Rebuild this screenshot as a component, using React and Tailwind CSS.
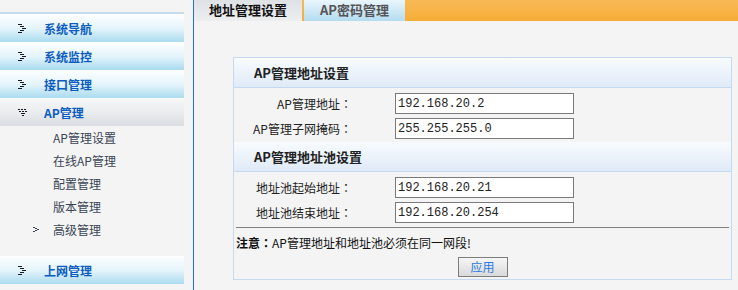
import React from 'react'

const font = { fontFamily: '"Noto Sans CJK SC", "Liberation Sans", sans-serif' }
const colonFont = { fontFamily: '"Noto Sans CJK JP", "Noto Sans CJK SC", sans-serif' }

function CollapsedArrow() {
  // dotted double chevron
  const dots = [
    [0, 0], [2, 0], [2, 2], [4, 2], [4, 4], [6, 4], [2, 6], [4, 6], [0, 8], [2, 8],
  ]
  return (
    <svg width="8" height="9" viewBox="0 0 8 9" shapeRendering="crispEdges">
      {dots.map(([x, y], i) => (
        <rect key={i} x={x} y={y} width="1.5" height="1" fill="#1a1a2a" />
      ))}
    </svg>
  )
}

function ExpandedArrow() {
  const dots = [
    [0, 0], [3, 0], [6, 0], [1, 2], [4, 2], [7, 2], [3, 4], [5, 4], [4, 6],
  ]
  return (
    <svg width="9" height="7" viewBox="0 0 9 7" shapeRendering="crispEdges">
      {dots.map(([x, y], i) => (
        <rect key={i} x={x} y={y} width="1.5" height="1" fill="#1a1a2a" />
      ))}
    </svg>
  )
}

function SmallArrow() {
  return (
    <svg width="7" height="5" viewBox="0 0 7 5" shapeRendering="crispEdges">
      <rect x="0" y="0" width="2" height="1" fill="#3a4656" />
      <rect x="2" y="1" width="2" height="1" fill="#3a4656" />
      <rect x="4" y="2" width="2" height="1" fill="#3a4656" />
      <rect x="2" y="3" width="2" height="1" fill="#3a4656" />
      <rect x="0" y="4" width="2" height="1" fill="#3a4656" />
    </svg>
  )
}

function MenuBar({ label, open }) {
  return (
    <div
      className={
        'h-[28px] flex items-center pl-[18px] border-t border-white ' +
        (open
          ? 'bg-gradient-to-b from-[#f4f6f7] via-[#eaecee] to-[#dadee2]'
          : 'bg-gradient-to-b from-[#fbfeff] via-[#e4f4fb] to-[#a9dbef]')
      }
    >
      <div className="w-[26px] flex items-center">
        {open ? <ExpandedArrow /> : <CollapsedArrow />}
      </div>
      <span className="text-[12px] font-bold text-[#0c5cc0]">{label}</span>
    </div>
  )
}

const subItems = ['AP管理设置', '在线AP管理', '配置管理', '版本管理', '高级管理']

function Row({ label, value }) {
  return (
    <div className="flex items-center h-[21px]">
      <div className="w-[118px] text-right text-[12px] text-[#222]">
        {label}
        <span style={colonFont}>：</span>
      </div>
      <div className="ml-[43px] w-[179px] h-[21px] border border-[#7a7a7a] bg-white flex items-center pl-[2px]">
        <span className="text-[12px] text-[#222]" style={{ fontFamily: '"Liberation Mono", monospace' }}>
          {value}
        </span>
      </div>
    </div>
  )
}

function SectionHeader({ title }) {
  return (
    <div className="h-[30px] flex items-center pl-[20px] border-b border-[#c5daf0] bg-gradient-to-b from-[#f8fbfe] to-[#dfeaf7]">
      <span className="text-[13px] font-bold text-[#222]">{title}</span>
    </div>
  )
}

export default function App() {
  return (
    <div className="flex w-[738px] h-[290px] bg-[#f4f4f4] overflow-hidden" style={font}>
      {/* Sidebar */}
      <aside className="w-[193px] shrink-0 pt-[12px]">
        <div className="w-[184px] border-t-2 border-[#c6dcef]">
          <MenuBar label="系统导航" />
          <MenuBar label="系统监控" />
          <MenuBar label="接口管理" />
          <MenuBar label="AP管理" open />
        </div>
        <div className="w-[184px]">
          {subItems.map((item, i) => (
            <div key={i} className="h-[23px] flex items-center relative">
              {i === 4 && (
                <div className="absolute left-[33px] top-[9px] flex">
                  <SmallArrow />
                </div>
              )}
              <span className="ml-[53px] text-[12px] text-[#3a4656]">{item}</span>
            </div>
          ))}
        </div>
        <div className="w-[184px] mt-[15px]">
          <MenuBar label="上网管理" />
        </div>
      </aside>

      <div className="w-px shrink-0 bg-[#2070e0]" />

      {/* Main */}
      <main className="flex-1 flex flex-col">
        <div className="h-[21px] flex bg-gradient-to-b from-[#f8b955] to-[#f6ad36]">
          <div className="w-[108px] flex items-center justify-center pb-[1px] bg-gradient-to-b from-[#dfe2e5] to-[#eceef0]">
            <span className="text-[13px] font-bold text-[#111]">地址管理设置</span>
          </div>
          <div className="ml-[2px] w-[101px] flex items-center justify-center pb-[1px] bg-gradient-to-b from-[#eaf6fc] to-[#b3dcf0]">
            <span className="text-[13px] font-bold text-[#555]">AP密码管理</span>
          </div>
        </div>

        <div className="mt-[36px] ml-[39px] mr-[6px] border border-[#c5daf0] flex flex-col">
          <SectionHeader title="AP管理地址设置" />
          <div className="flex flex-col gap-[4px] pt-[5px] pb-[3px]">
            <Row label="AP管理地址" value="192.168.20.2" />
            <Row label="AP管理子网掩码" value="255.255.255.0" />
          </div>
          <SectionHeader title="AP管理地址池设置" />
          <div className="flex flex-col gap-[4px] pt-[5px] pb-[4px]">
            <Row label="地址池起始地址" value="192.168.20.21" />
            <Row label="地址池结束地址" value="192.168.20.254" />
          </div>
          <div className="mx-[2px] h-px bg-[#808080]" />
          <div className="h-[29px] flex items-center pl-[2px] text-[12px] text-[#111]">
            <span className="font-bold">注意<span style={colonFont}>：</span></span>
            <span>AP管理地址和地址池必须在同一网段!</span>
          </div>
          <div className="flex justify-center pb-[2px]">
            <button className="w-[50px] h-[20px] border border-[#7d7d7d] bg-gradient-to-b from-[#f6f6f6] to-[#d9d9d9] text-[12px] text-[#2a7ae2] leading-none">
              应用
            </button>
          </div>
        </div>
      </main>
    </div>
  )
}
